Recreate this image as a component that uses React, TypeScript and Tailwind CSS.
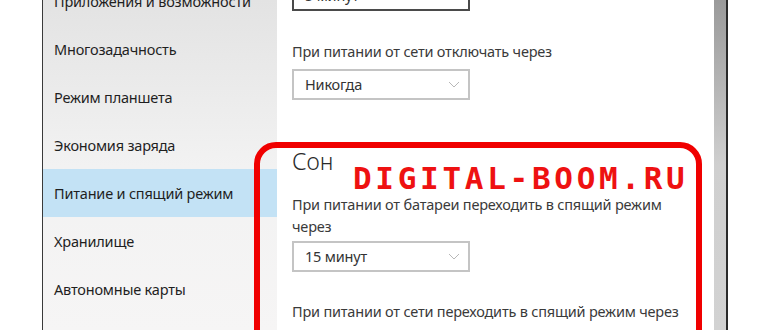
import { ReactNode } from "react";

const navItems = [
  "Приложения и возможности",
  "Многозадачность",
  "Режим планшета",
  "Экономия заряда",
  "Питание и спящий режим",
  "Хранилище",
  "Автономные карты",
];

function Chevron() {
  return (
    <svg width="12" height="7" viewBox="0 0 12 7" className="shrink-0">
      <path d="M1 1 L6 6 L11 1" fill="none" stroke="#b8b8b8" strokeWidth="1" />
    </svg>
  );
}

function Dropdown({ value, focused, className }: { value: string; focused?: boolean; className?: string }) {
  return (
    <div
      className={
        "flex h-[31px] w-[178px] items-center justify-between pl-[11px] pr-[8px] " +
        (focused ? "border-2 border-[#4a4a4a] " : "border-2 border-[#c4c4c4] ") +
        (className ?? "")
      }
    >
      <span className="text-[14.5px] tracking-[-0.2px] text-[#333]">{value}</span>
      <Chevron />
    </div>
  );
}

function Label({ children, className }: { children: ReactNode; className?: string }) {
  return (
    <p className={"text-[14.5px] leading-[22px] tracking-[-0.2px] text-[#3a3a3a] " + (className ?? "")}>
      {children}
    </p>
  );
}

export default function App() {
  return (
    <div
      className="relative flex h-[330px] w-[770px] overflow-hidden bg-white"
      style={{ fontFamily: '"Noto Sans", "Open Sans", sans-serif' }}
    >
      <div className="w-[42px] shrink-0 bg-white" />
      <div className="w-[235px] shrink-0 border-l border-[#3a3a3a] bg-gradient-to-b from-[#e3e3e3] via-[#f2f2f2] to-[#f6f5f5]">
        <div className="mt-[-23px] flex flex-col">
          {navItems.map((item) => (
            <div
              key={item}
              className={
                "flex h-[48px] items-center pl-[11px] pt-[2px] text-[14.5px] tracking-[-0.2px] text-[#1f1f1f] " +
                (item === "Питание и спящий режим" ? "bg-[#c3e2f5]" : "")
              }
            >
              {item}
            </div>
          ))}
        </div>
      </div>

      <div className="flex-1 pl-[15px]">
        <div className="mt-[-20px] flex flex-col">
          <Dropdown value="5 минут" focused />
          <Label className="mt-[29px]">При питании от сети отключать через</Label>
          <Dropdown value="Никогда" className="mt-[7px]" />
          <h2 className="mt-[46px] text-[23px] font-light leading-[30px] text-[#2a2a2a]">Сон</h2>
          <Label className="mt-[17px] w-[385px]">При питании от батареи переходить в спящий режим через</Label>
          <Dropdown value="15 минут" className="mt-[4px]" />
          <Label className="mt-[28px]">При питании от сети переходить в спящий режим через</Label>
        </div>
      </div>

      <div className="w-[12px] shrink-0 bg-gradient-to-b from-[#9a9a9a] via-[#cfcfcf] to-[#d2d2d2]" />
      <div className="w-[2px] shrink-0 bg-[#2a2a2a]" />
      <div className="w-[42px] shrink-0 bg-white" />

      <div className="pointer-events-none absolute left-[254px] top-[142px] h-[260px] w-[448px] rounded-[22px] border-[6px] border-[#f00000]" />
      <div
        className="absolute left-[353px] top-[160px] text-[31px] font-bold leading-[36px] tracking-[3.7px] text-[#ee1111]"
        style={{ fontFamily: '"DejaVu Sans Mono", monospace' }}
      >
        DIGITAL-BOOM.RU
      </div>
    </div>
  );
}
